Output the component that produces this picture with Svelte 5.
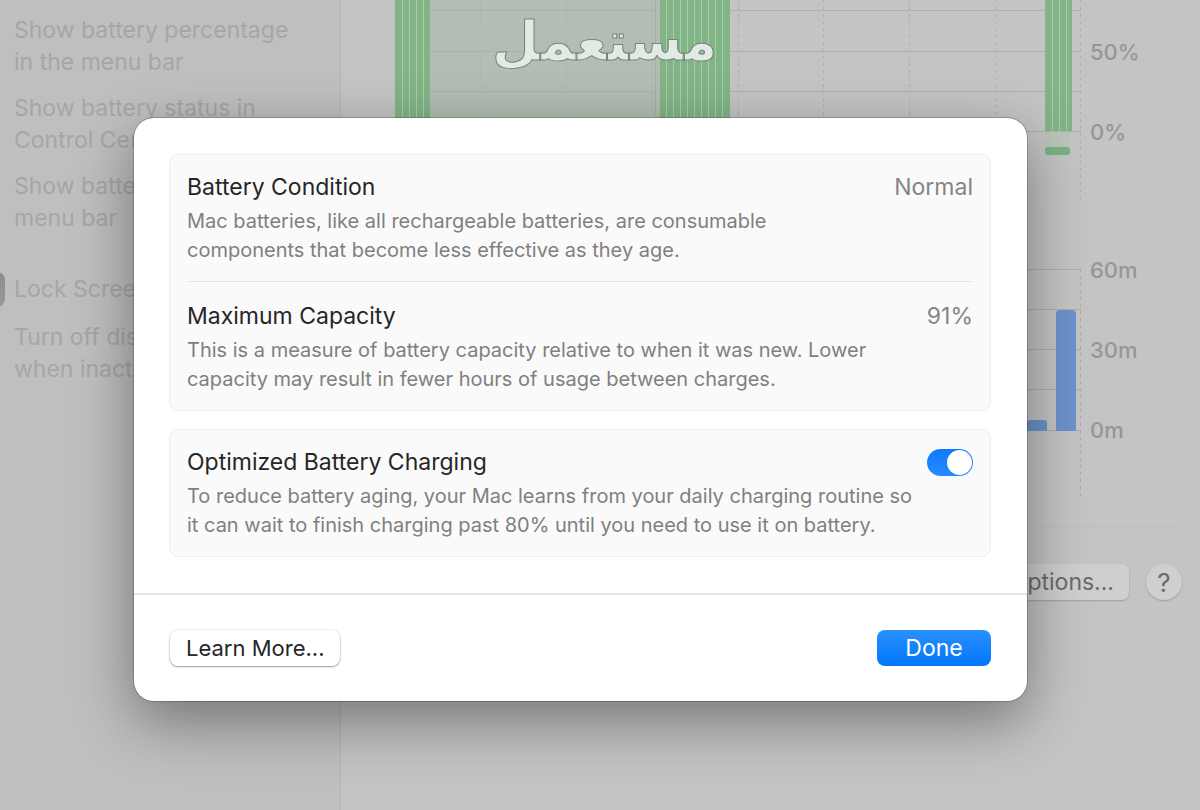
<script lang="ts">
  let optimized = $state(true);

  const settings = [
    ['Show battery percentage', 'in the menu bar'],
    ['Show battery status in', 'Control Center'],
    ['Show battery in the', 'menu bar'],
  ];
  const columns = [139, 225, 311, 397, 482, 568, 654, 739];
  const stripes = (from: number, to: number, step: number) =>
    Array.from({ length: Math.ceil((to - from) / step) - 1 }, (_, i) => from + step * (i + 1));
  const lightStripes = [...stripes(54, 89, 7), ...stripes(318, 388, 7), ...stripes(704, 731, 7)];
</script>

<div class="window">
  <aside>
    {#each settings as lines}
      <p>{lines[0]}<br />{lines[1]}</p>
    {/each}
    <h2>Lock Screen</h2>
    <p>Turn off display<br />when inactive</p>
  </aside>

  <main>
    <section class="card">
      <div class="chart level">
        <svg viewBox="0 0 740 204" preserveAspectRatio="none" aria-hidden="true">
          <rect x="89" y="0" width="230" height="131" fill="#b2bdb3" />
          <g stroke="#aeb0ae">
            {#each [10.5, 51.5, 91.5, 131.5] as y}<path d="M54 {y}H740" />{/each}
          </g>
          <g stroke="#adb0ad" stroke-dasharray="3 4">
            {#each columns as x}<path d="M{x}.5 0V200" />{/each}
          </g>
          <path d="M314.5 0V131" stroke="#a8aea9" />
          <g fill="#82b487">
            <rect x="54" y="0" width="35" height="131" />
            <rect x="319" y="0" width="70" height="131" />
            <rect x="704" y="0" width="27" height="131" />
          </g>
          <g stroke="#a5d0a4">
            {#each lightStripes as x}<path d="M{x}.5 0V131" />{/each}
          </g>
          <rect x="704" y="132" width="25" height="16" fill="#bbc6bb" />
          <rect x="704" y="147" width="25" height="8" rx="3" fill="#7bb280" />
        </svg>
        <div class="scale"><span>50%</span><span>0%</span></div>
      </div>
      <div class="chart usage">
        <svg viewBox="0 0 740 250" preserveAspectRatio="none" aria-hidden="true">
          <g stroke="#adadad">
            {#each [19.5, 59.5, 99.5, 139.5, 180.5] as y}<path d="M54 {y}H740" />{/each}
          </g>
          <g stroke="#adadad" stroke-dasharray="3 4">
            {#each columns as x}<path d="M{x}.5 19V250" />{/each}
          </g>
          <path d="M686 181v-8q0-3 3-3h14q3 0 3 3v8z" fill="#6e92cb" />
          <path d="M715 181V64q0-4 4-4h12q4 0 4 4v117z" fill="#6e92cb" />
        </svg>
        <div class="scale"><span>60m</span><span>30m</span><span>0m</span></div>
      </div>
    </section>
    <div class="actions">
      <button class="options" type="button">Options...</button>
      <button class="help" type="button" aria-label="Help">?</button>
    </div>
  </main>

  <div class="watermark" lang="ar" dir="rtl">مستعمل</div>

  <div class="overlay">
    <div class="dialog" role="dialog" aria-label="Battery Health">
      <div class="body">
        <section class="group">
          <div class="row">
            <div class="heading"><h3>Battery Condition</h3><span>Normal</span></div>
            <p>Mac batteries, like all rechargeable batteries, are consumable<br />components that become less effective as they age.</p>
          </div>
          <div class="row">
            <div class="heading"><h3>Maximum Capacity</h3><span>91%</span></div>
            <p>This is a measure of battery capacity relative to when it was new. Lower<br />capacity may result in fewer hours of usage between charges.</p>
          </div>
        </section>
        <section class="group">
          <div class="row">
            <div class="heading">
              <h3><label for="optimized">Optimized Battery Charging</label></h3>
              <input id="optimized" type="checkbox" role="switch" bind:checked={optimized} />
            </div>
            <p>To reduce battery aging, your Mac learns from your daily charging routine so<br />it can wait to finish charging past 80% until you need to use it on battery.</p>
          </div>
        </section>
      </div>
      <footer>
        <button class="learn" type="button">Learn More...</button>
        <button class="done" type="button">Done</button>
      </footer>
    </div>
  </div>
</div>

<style>
  :global(body) { margin: 0; background: #c4c4c4; }
  .window, .window * { box-sizing: border-box; }
  .window {
    position: relative;
    display: flex;
    min-height: 100vh;
    overflow: hidden;
    font-family: Inter, "Liberation Sans", sans-serif;
    font-size: 23px;
    background: #c4c4c4;
  }
  h2, h3, p { margin: 0; font-weight: 400; }
  button { font: inherit; border: 0; padding: 0; }

  aside {
    flex: none;
    width: 341px;
    padding: 14px;
    border-right: 1px solid #b4b4b4;
    background: #bfbfbf;
    color: #a6a6a6;
    line-height: 32px;
  }
  aside p { margin-bottom: 14px; }
  aside h2 {
    position: relative;
    margin: 39px 0 16px;
    font-size: 23px;
    line-height: 32px;
  }
  aside h2::before {
    content: "";
    position: absolute;
    left: -44px;
    top: -1px;
    width: 35px;
    height: 35px;
    border-radius: 8px;
    background: linear-gradient(#8c8c8c, #999);
  }

  main { flex: 1; min-width: 0; }
  .card {
    margin-right: 20px;
    height: 527px;
    border-bottom: 1px solid #bebebe;
  }
  .chart { display: flex; }
  .chart svg { flex: 1; min-width: 0; height: 100%; }
  .level { height: 250px; }
  .level svg { height: 204px; }
  .usage { height: 250px; }
  .scale {
    flex: none;
    width: 99px;
    padding-left: 9px;
    display: flex;
    flex-direction: column;
    gap: 48px;
    font-size: 22px;
    line-height: 32px;
    color: #969696;
    font-weight: 500;
  }
  .level .scale { padding-top: 36px; }
  .usage .scale { padding-top: 4px; }
  .actions {
    display: flex;
    justify-content: flex-end;
    gap: 17px;
    padding: 37px 18px 0 0;
    color: #6b6b6b;
  }
  .options, .help {
    height: 36px;
    background: #cfcfcf;
    color: inherit;
    box-shadow: 0 1px 2px #0003;
  }
  .options { padding: 0 15px; border-radius: 7px; }
  .help { width: 36px; border-radius: 50%; font-size: 26px; }

  .watermark {
    position: absolute;
    top: 0;
    left: 492px;
    font: 700 54px/84px "DejaVu Sans", sans-serif;
    color: #e3eae4;
    -webkit-text-stroke: 1px #76857a;
  }

  .overlay {
    position: absolute;
    inset: 0;
    padding: 118px 173px 0 134px;
  }
  .dialog {
    border-radius: 20px;
    background: #fff;
    color: #262626;
    box-shadow: 0 0 0 1px #0003, 0 20px 60px #0006;
  }
  .body {
    display: grid;
    gap: 18px;
    padding: 36px 36px 36px 35px;
    border-bottom: 2px solid #e4e4e4;
  }
  .group {
    padding: 0 17px;
    border: 1px solid #efefef;
    border-radius: 9px;
    background: #fafafa;
  }
  .row { padding: 15px 0 16px; }
  .row + .row { padding-top: 17px; border-top: 1px solid #e5e5e5; }
  .heading {
    display: flex;
    justify-content: space-between;
    align-items: center;
    margin-bottom: 3px;
    line-height: 34px;
  }
  h3 { font-size: 23px; }
  .heading span { color: #858585; }
  .row p { font-size: 20px; line-height: 29px; color: #808080; white-space: nowrap; }
  input {
    appearance: none;
    width: 46px;
    height: 27px;
    margin: 0;
    padding: 1px;
    border-radius: 14px;
    background: #c9c9c9;
  }
  input::before {
    content: "";
    display: block;
    width: 25px;
    height: 25px;
    border-radius: 50%;
    background: #fff;
  }
  input:checked { background: linear-gradient(#0a7aff, #2a8bff); }
  input:checked::before { margin-left: auto; }
  footer {
    display: flex;
    justify-content: space-between;
    padding: 35px 36px;
  }
  .learn, .done { height: 36px; border-radius: 8px; }
  .learn {
    padding: 0 16px;
    background: #fff;
    color: #262626;
    font-size: 22px;
    box-shadow: 0 0 0 1px #0000000f, 0 1px 2px #00000059;
  }
  .done {
    width: 114px;
    background: linear-gradient(#2a90ff, #0077fb);
    color: #fff;
  }
</style>
